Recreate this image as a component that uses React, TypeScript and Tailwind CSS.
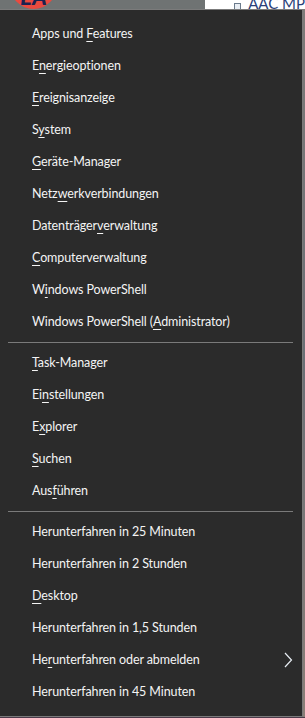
import React from 'react';

type Item = { pre: string; key?: string; post?: string; sub?: boolean };

const GROUPS: Item[][] = [
  [
    { pre: 'Apps und ', key: 'F', post: 'eatures' },
    { pre: 'E', key: 'n', post: 'ergieoptionen' },
    { pre: '', key: 'E', post: 'reignisanzeige' },
    { pre: 'S', key: 'y', post: 'stem' },
    { pre: '', key: 'G', post: 'eräte-Manager' },
    { pre: 'Netz', key: 'w', post: 'erkverbindungen' },
    { pre: 'Datenträger', key: 'v', post: 'erwaltung' },
    { pre: '', key: 'C', post: 'omputerverwaltung' },
    { pre: 'W', key: 'i', post: 'ndows PowerShell' },
    { pre: 'Windows PowerShell (', key: 'A', post: 'dministrator)' },
  ],
  [
    { pre: '', key: 'T', post: 'ask-Manager' },
    { pre: 'Ei', key: 'n', post: 'stellungen' },
    { pre: 'E', key: 'x', post: 'plorer' },
    { pre: '', key: 'S', post: 'uchen' },
    { pre: 'Aus', key: 'f', post: 'ühren' },
  ],
  [
    { pre: 'Herunterfahren in 25 Minuten' },
    { pre: 'Herunterfahren in 2 Stunden' },
    { pre: '', key: 'D', post: 'esktop' },
    { pre: 'Herunterfahren in 1,5 Stunden' },
    { pre: 'He', key: 'r', post: 'unterfahren oder abmelden', sub: true },
    { pre: 'Herunterfahren in 45 Minuten' },
  ],
];

export default function App() {
  return (
    <div
      className="relative w-[305px] h-[718px] overflow-hidden bg-[#4b3a4a]"
      style={{ fontFamily: 'Lato, "Noto Sans", sans-serif' }}
    >
      {/* desktop peeking above the menu */}
      <div className="flex h-[9px]">
        <div className="relative w-[205px] bg-[#6f7373] overflow-hidden">
          <div className="absolute left-[10px] -top-[38px] w-[47px] h-[47px] rounded-full bg-[#ea4a3f] flex items-end justify-center pb-[1px]">
            <span className="text-[#1b2250] font-black italic text-[22px] leading-none">EA</span>
          </div>
        </div>
        <div className="flex-1 bg-white flex items-start overflow-hidden">
          <div className="ml-[29px] mt-[3px] w-[16px] h-[8px] border border-[#6b7b8c] bg-[#e9eef4]" />
          <span className="ml-[7px] -mt-[4px] text-[15px] leading-none text-[#2a3f7a] whitespace-nowrap">AAC MP</span>
        </div>
      </div>

      <div className="flex">
        <div className="w-[303px] bg-[#2b2b2b] border-t border-r border-b border-[#7b7b7b] pt-[8px] pb-[8px] text-[#f4f4f4] text-[12.5px] tracking-[-0.1px]">
          {GROUPS.map((g, gi) => (
            <div key={gi}>
              {gi > 0 && <div className="mt-[4px] mb-[4px] ml-[8px] mr-[9px] h-px bg-[#7a7a7a]" />}
              {g.map((it, i) => (
                <div key={i} className="h-[32px] flex items-center pl-[32px] pr-[10px]">
                  <span className="whitespace-nowrap">
                    {it.pre}
                    {it.key && <span className="underline underline-offset-[3px] decoration-1">{it.key}</span>}
                    {it.post}
                  </span>
                  {it.sub && (
                    <svg className="ml-auto mr-[-1px]" width="9" height="16" viewBox="0 0 9 16">
                      <polyline points="1,1 7.5,8 1,15" fill="none" stroke="#e8eef4" strokeWidth="1.2" />
                    </svg>
                  )}
                </div>
              ))}
            </div>
          ))}
        </div>
        <div className="flex-1 bg-gradient-to-b from-[#7d7a78] via-[#6a6f75] to-[#8a7f78]" />
      </div>
    </div>
  );
}
